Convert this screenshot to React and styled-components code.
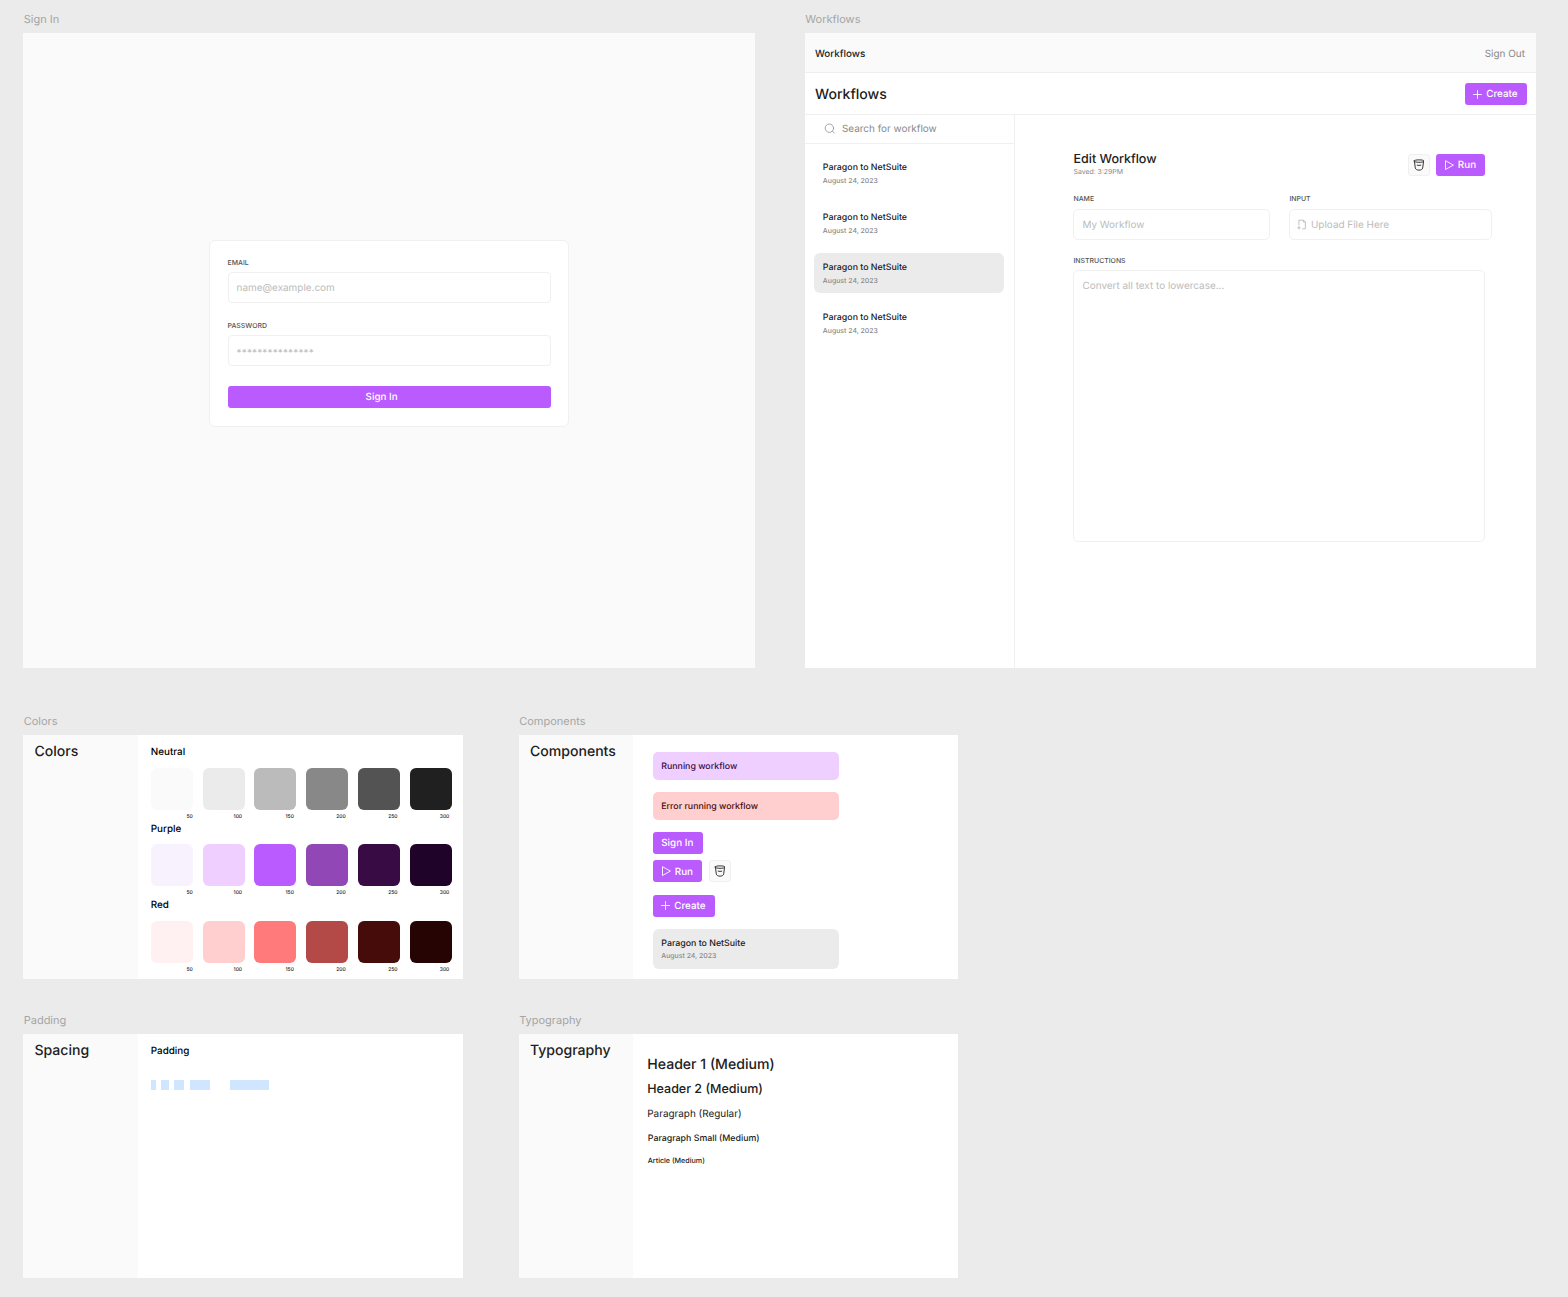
import React from "react";
import styled, { createGlobalStyle } from "styled-components";

const neutral = { 50: "#fafafa", 100: "#ebebeb", 150: "#bbbbbb", 200: "#888888", 250: "#535353", 300: "#202020" };
const purple = { 50: "#f8f2ff", 100: "#eecfff", 150: "#ba5bff", 200: "#9147b6", 250: "#380b44", 300: "#1f0328" };
const red = { 50: "#fff1f1", 100: "#ffcfcf", 150: "#ff7b7b", 200: "#b34a47", 250: "#460c0a", 300: "#270404" };

const GlobalStyle = createGlobalStyle`
  *, *::before, *::after { box-sizing: border-box; }
  body {
    margin: 0;
    background: ${neutral[100]};
    font-family: Inter, "Liberation Sans", sans-serif;
    color: ${neutral[300]};
    text-rendering: geometricPrecision;
    -webkit-font-smoothing: antialiased;
  }
  button { text-rendering: inherit; }
`;

/* ---------- type ---------- */

const variants = {
  h1: { size: 14.08, line: 18, weight: 450, drop: 0.9 },
  h2: { size: 12.5, line: 16, weight: 450, drop: 0.8 },
  p: { size: 9.93, line: 13, weight: 400, drop: 0.8 },
  pm: { size: 9.85, line: 13, weight: 500, drop: 0.8 },
  small: { size: 8.82, line: 12, weight: 500, drop: 0.6 },
  article: { size: 7.15, line: 9, weight: 500, drop: 0.2 },
  caption: { size: 6.92, line: 9, weight: 500, drop: 0.1 },
};

const Text = styled.div`
  display: block;
  padding-top: ${(p) => variants[p.$v].drop}px;
  margin-bottom: -${(p) => variants[p.$v].drop}px;
  font-size: ${(p) => variants[p.$v].size}px;
  line-height: ${(p) => variants[p.$v].line}px;
  font-weight: ${(p) => p.$weight || variants[p.$v].weight};
  letter-spacing: ${(p) => p.$tracking || 0}px;
  color: ${(p) => p.$color || neutral[300]};
  white-space: nowrap;
`;

/* ---------- canvas ---------- */

const Canvas = styled.main`
  width: 1568px;
  height: 1297px;
  padding: 11.9px 0 0 23.4px;
  overflow: hidden;
`;

const FrameRow = styled.div`
  display: flex;
  gap: ${(p) => p.$gap}px;
  height: ${(p) => p.$height}px;
`;

const FrameLabel = styled.div`
  height: 21.5px;
  padding: 0.4px 0 0 0.3px;
  font-size: 11px;
  line-height: 15px;
  color: #a5a5a5;
`;

const Screen = styled.section`
  display: flex;
  flex-direction: column;
  width: 731.4px;
  height: 634.5px;
  background: ${(p) => p.$bg};
`;

const Board = styled.section`
  display: flex;
  width: 439.4px;
  height: 244.4px;
  background: #fff;
`;

const BoardSide = styled.div`
  width: 114.6px;
  padding: 7px 11px;
  background: ${neutral[50]};
`;

const BoardBody = styled.div`
  flex: 1;
  padding: ${(p) => p.$pad};
`;

/* ---------- controls ---------- */

const Button = styled.button`
  display: flex;
  align-items: center;
  justify-content: ${(p) => (p.$wide ? "center" : "flex-start")};
  width: ${(p) => p.$w};
  height: 22px;
  padding: 0 ${(p) => (p.$wide ? 15 : 0)}px 0 ${(p) => (p.$wide ? 0 : p.$pl || 8)}px;
  gap: ${(p) => p.$gap || 0}px;
  border: 0;
  border-radius: 3px;
  background: ${purple[150]};
  font-family: inherit;
`;

const IconButton = styled.button`
  display: flex;
  align-items: center;
  justify-content: center;
  width: 22px;
  height: 22px;
  padding: 0;
  border: 1px solid #f0f0f0;
  border-radius: 3px;
  background: ${neutral[50]};
`;

const PlusIcon = () => (
  <svg width="9" height="9" viewBox="0 0 9 9" fill="none" stroke="#fff" strokeWidth="0.85" strokeLinecap="round">
    <path d="M4.5 0.5v8M0.5 4.5h8" />
  </svg>
);

const PlayIcon = () => (
  <svg width="10" height="10" viewBox="0 0 10 10" fill="none" stroke="#fff" strokeWidth="0.9" strokeLinejoin="round">
    <path d="M1.5 0.7v8.8L9.4 5.1z" />
  </svg>
);

const BucketIcon = () => (
  <svg width="12" height="12" viewBox="0 0 12 12" fill="none" stroke={neutral[300]} strokeWidth="0.9" strokeLinecap="round">
    <path d="M1.2 2C1.2 1.1 3.3.9 6 .9s4.8.2 4.8 1.1S8.7 3.3 6 3.3 1.2 2.9 1.2 2z" />
    <path d="M1.5 2.8l.8 6.1c.4 3 7 3 7.4 0l.8-6.1" />
    <path d="M4.2 6.2q1.8.5 3.6 0" />
  </svg>
);

const SearchIcon = () => (
  <svg width="11" height="11" viewBox="0 0 11 11" fill="none" stroke={neutral[200]} strokeWidth="0.75" strokeLinecap="round">
    <circle cx="5.4" cy="5.2" r="4.2" />
    <path d="M8.5 8.3l1.8 1.8" />
  </svg>
);

const FileIcon = () => (
  <svg width="10" height="11" viewBox="0 0 10 11" fill="none" stroke={neutral[150]} strokeWidth="0.9">
    <path d="M1.9 6.4V1.2h4.8l1.7 1.7v6.9H5.2" />
    <path d="M6.5 1.2v1.9h1.9" />
    <path d="M2 7.2v3.2M0.4 8.8h3.2" />
  </svg>
);

const CreateButton = () => (
  <Button $w="62px" $gap={4.5}>
    <PlusIcon />
    <Text as="span" $v="pm" $color="#fff">Create</Text>
  </Button>
);

const RunButton = () => (
  <Button $w="49px" $gap={4}>
    <PlayIcon />
    <Text as="span" $v="pm" $color="#fff">Run</Text>
  </Button>
);

const TrashButton = () => (
  <IconButton aria-label="Delete">
    <BucketIcon />
  </IconButton>
);

const Field = styled.div`
  display: flex;
  flex-direction: column;
  flex-shrink: 0;
  gap: ${(p) => p.$gap || 5}px;
  width: ${(p) => p.$w || "auto"};
`;

const Input = styled.div`
  display: flex;
  align-items: ${(p) => (p.$area ? "flex-start" : "center")};
  gap: 3.5px;
  height: ${(p) => p.$h || 31}px;
  padding: ${(p) => p.$pad || "0 8px"};
  border: 1px solid #f0f0f0;
  border-radius: ${(p) => p.$radius || 4}px;
  background: #fff;
`;

/* ---------- sign in ---------- */

const SignInCard = styled.form`
  display: flex;
  flex-direction: column;
  width: 360.5px;
  height: 186.5px;
  margin: 206.8px 0 0 185.2px;
  padding: 17px 17.4px 17px 18px;
  border: 1px solid #f0f0f0;
  border-radius: 6px;
  background: #fff;
`;

const FieldStack = styled.div`
  display: flex;
  flex-direction: column;
  gap: 18px;
  margin-bottom: 19.5px;
`;

/* ---------- workflows ---------- */

const TopBar = styled.header`
  display: flex;
  align-items: center;
  justify-content: space-between;
  height: 39.5px;
  padding: 2.2px 11.4px 0 10px;
  border-bottom: 1px solid #efefef;
  background: ${neutral[50]};
`;

const TitleBar = styled.div`
  display: flex;
  align-items: flex-start;
  justify-content: space-between;
  height: 42px;
  padding: 10.2px 9.6px 0 10px;
  border-bottom: 1px solid #f0f0f0;
`;

const Title = styled.div`
  padding-top: 2.3px;
`;

const Columns = styled.div`
  display: flex;
  flex: 1;
  min-height: 0;
`;

const Sidebar = styled.aside`
  flex: 0 0 210px;
  border-right: 1px solid #f0f0f0;
`;

const SearchBar = styled.div`
  display: flex;
  align-items: center;
  gap: 7px;
  height: 29.2px;
  padding-left: 19px;
  border-bottom: 1px solid #f0f0f0;
`;

const List = styled.div`
  display: flex;
  flex-direction: column;
  gap: 10px;
  padding: 9px 10px 0 9.4px;
`;

const Item = styled.div`
  display: flex;
  flex-direction: column;
  gap: 1.6px;
  width: ${(p) => p.$w || "auto"};
  height: 40px;
  padding: 8.8px 8.5px;
  border-radius: 6px;
  background: ${(p) => (p.$selected ? neutral[100] : "transparent")};
`;

const Editor = styled.div`
  flex: 1;
  min-width: 0;
  padding: 36.3px 51.5px 0 58.5px;
`;

const EditorHead = styled.div`
  display: flex;
  justify-content: space-between;
  height: 43.2px;
`;

const Actions = styled.div`
  display: flex;
  gap: 6px;
  padding-top: 2.7px;
`;

const FieldRow = styled.div`
  display: flex;
  gap: 19px;
  margin-bottom: 16px;
`;

/* ---------- colour board ---------- */

const Palette = styled.div`
  display: flex;
  flex-direction: column;
  height: 76.6px;
`;

const Swatches = styled.div`
  display: flex;
  gap: 9.82px;
  margin-top: 9.4px;
`;

const Swatch = styled.div`
  width: 42px;
  text-align: right;
`;

const Chip = styled.div`
  height: 42px;
  border-radius: 6px;
  background: ${(p) => p.$color};
`;

const Shade = styled.div`
  padding: 4.3px ${(p) => (p.$flush ? 0 : 2.5)}px 0 0;
  font-size: 5px;
  line-height: 7px;
  font-weight: 500;
`;

/* ---------- components board ---------- */

const Notice = styled.div`
  display: flex;
  align-items: center;
  width: 186px;
  height: 28px;
  margin-bottom: 12px;
  padding-left: 8.5px;
  border-radius: 5px;
  background: ${(p) => p.$bg};
`;

const ButtonLine = styled.div`
  display: flex;
  gap: 7.6px;
  margin-bottom: ${(p) => p.$mb}px;
`;

/* ---------- spacing and typography boards ---------- */

const Bars = styled.div`
  display: flex;
  margin-top: 22.8px;
`;

const Bar = styled.div`
  width: ${(p) => p.$w}px;
  height: 10px;
  margin-right: ${(p) => p.$after}px;
  background: #d0e5ff;
`;

const Sample = styled.div`
  margin-bottom: ${(p) => p.$mb}px;
  padding-left: ${(p) => p.$pl || 0}px;
`;

const palettes = [
  ["Neutral", neutral],
  ["Purple", purple],
  ["Red", red],
];

const WorkflowItem = (props) => (
  <Item {...props}>
    <Text $v="small">Paragon to NetSuite</Text>
    <Text $v="caption" $color={neutral[200]}>August 24, 2023</Text>
  </Item>
);

function SignIn() {
  return (
    <div>
      <FrameLabel>Sign In</FrameLabel>
      <Screen $bg={neutral[50]}>
        <SignInCard>
          <FieldStack>
            <Field>
              <Text $v="caption" $color={neutral[250]}>EMAIL</Text>
              <Input $pad="0.6px 8px 0"><Text $v="p" $color={neutral[150]}>name@example.com</Text></Input>
            </Field>
            <Field>
              <Text $v="caption" $color={neutral[250]}>PASSWORD</Text>
              <Input $pad="4.5px 8px 0"><Text $v="p" $color={neutral[150]} $tracking={0.18}>***************</Text></Input>
            </Field>
          </FieldStack>
          <Button type="button" $wide $w="100%">
            <Text as="span" $v="pm" $color="#fff">Sign In</Text>
          </Button>
        </SignInCard>
      </Screen>
    </div>
  );
}

function Workflows() {
  return (
    <div>
      <FrameLabel>Workflows</FrameLabel>
      <Screen $bg="#fff">
        <TopBar>
          <Text $v="pm">Workflows</Text>
          <Text $v="p" $color={neutral[200]}>Sign Out</Text>
        </TopBar>
        <TitleBar>
          <Title><Text $v="h1">Workflows</Text></Title>
          <CreateButton />
        </TitleBar>
        <Columns>
          <Sidebar>
            <SearchBar>
              <SearchIcon />
              <Text $v="p" $color={neutral[200]}>Search for workflow</Text>
            </SearchBar>
            <List>
              {[0, 1, 2, 3].map((i) => <WorkflowItem key={i} $selected={i === 2} />)}
            </List>
          </Sidebar>
          <Editor>
            <EditorHead>
              <div>
                <Text $v="h2">Edit Workflow</Text>
                <Text $v="caption" $weight={400} $color={neutral[200]}>Saved: 3:29PM</Text>
              </div>
              <Actions>
                <TrashButton />
                <RunButton />
              </Actions>
            </EditorHead>
            <FieldRow>
              <Field $w="197px" $gap={5.5}>
                <Text $v="caption" $color={neutral[250]}>NAME</Text>
                <Input $radius={5}><Text $v="p" $color={neutral[150]}>My Workflow</Text></Input>
              </Field>
              <Field $w="203px" $gap={5.5}>
                <Text $v="caption" $color={neutral[250]}>INPUT</Text>
                <Input $radius={5} $pad="0 7px">
                  <FileIcon />
                  <Text $v="p" $color={neutral[150]}>Upload File Here</Text>
                </Input>
              </Field>
            </FieldRow>
            <Field>
              <Text $v="caption" $color={neutral[250]}>INSTRUCTIONS</Text>
              <Input $area $h={272} $radius={5} $pad="8px">
                <Text $v="p" $color={neutral[150]}>Convert all text to lowercase...</Text>
              </Input>
            </Field>
          </Editor>
        </Columns>
      </Screen>
    </div>
  );
}

function Colors() {
  return (
    <div>
      <FrameLabel>Colors</FrameLabel>
      <Board>
        <BoardSide><Text $v="h1">Colors</Text></BoardSide>
        <BoardBody $pad="10.2px 0 0 12.8px">
          {palettes.map(([name, shades]) => (
            <Palette key={name}>
              <Text $v="pm" $color="#000">{name}</Text>
              <Swatches>
                {Object.entries(shades).map(([shade, color]) => (
                  <Swatch key={shade}>
                    <Chip $color={color} />
                    <Shade $flush={shade === "50"}>{shade}</Shade>
                  </Swatch>
                ))}
              </Swatches>
            </Palette>
          ))}
        </BoardBody>
      </Board>
    </div>
  );
}

function Components() {
  return (
    <div>
      <FrameLabel>Components</FrameLabel>
      <Board>
        <BoardSide><Text $v="h1">Components</Text></BoardSide>
        <BoardBody $pad="17px 0 0 19.3px">
          <Notice $bg={purple[100]}><Text $v="small" $color={purple[250]}>Running workflow</Text></Notice>
          <Notice $bg={red[100]}><Text $v="small" $color={red[250]}>Error running workflow</Text></Notice>
          <ButtonLine $mb={6.4}>
            <Button $w="50.5px" $pl={8.5}><Text as="span" $v="pm" $color="#fff">Sign In</Text></Button>
          </ButtonLine>
          <ButtonLine $mb={12.6}>
            <RunButton />
            <TrashButton />
          </ButtonLine>
          <ButtonLine $mb={12}>
            <CreateButton />
          </ButtonLine>
          <WorkflowItem $selected $w="186px" />
        </BoardBody>
      </Board>
    </div>
  );
}

function Spacing() {
  return (
    <div>
      <FrameLabel>Padding</FrameLabel>
      <Board>
        <BoardSide><Text $v="h1">Spacing</Text></BoardSide>
        <BoardBody $pad="10.5px 0 0 12.8px">
          <Text $v="pm" $color="#000">Padding</Text>
          <Bars>
            <Bar $w={5} $after={5.2} />
            <Bar $w={8} $after={5} />
            <Bar $w={10} $after={5.6} />
            <Bar $w={20} $after={20} />
            <Bar $w={39.4} $after={0} />
          </Bars>
        </BoardBody>
      </Board>
    </div>
  );
}

function Typography() {
  return (
    <div>
      <FrameLabel>Typography</FrameLabel>
      <Board>
        <BoardSide><Text $v="h1">Typography</Text></BoardSide>
        <BoardBody $pad="21px 0 0 13.8px">
          <Sample $mb={8}><Text $v="h1">Header 1 (Medium)</Text></Sample>
          <Sample $mb={10.2}><Text $v="h2">Header 2 (Medium)</Text></Sample>
          <Sample $mb={12.5}><Text $v="p">Paragraph (Regular)</Text></Sample>
          <Sample $mb={11} $pl={0.5}><Text $v="small">Paragraph Small (Medium)</Text></Sample>
          <Sample $mb={0} $pl={0.5}><Text $v="article">Article (Medium)</Text></Sample>
        </BoardBody>
      </Board>
    </div>
  );
}

export default function App() {
  return (
    <>
      <GlobalStyle />
      <Canvas>
        <FrameRow $gap={50.2} $height={701.6}>
          <SignIn />
          <Workflows />
        </FrameRow>
        <FrameRow $gap={56.1} $height={298.8}>
          <Colors />
          <Components />
        </FrameRow>
        <FrameRow $gap={56.1} $height={266}>
          <Spacing />
          <Typography />
        </FrameRow>
      </Canvas>
    </>
  );
}
